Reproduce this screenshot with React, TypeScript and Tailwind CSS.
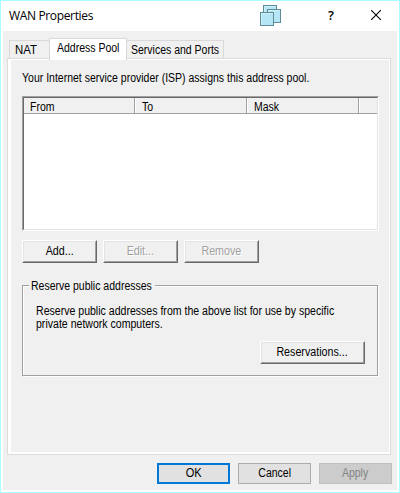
import type { ReactNode } from 'react';

function Label({ children, center = false, scale = 'scale-x-[0.875]' }: { children: ReactNode; center?: boolean; scale?: string }) {
  return <span className={`inline-block ${scale} ${center ? 'origin-center' : 'origin-left'}`}>{children}</span>;
}

function RaisedButton({ children, className = '', disabled = false }: { children: ReactNode; className?: string; disabled?: boolean }) {
  return (
    <button
      disabled={disabled}
      className={`h-[23px] border border-t-white border-l-white border-r-[#696969] border-b-[#696969] bg-[#f0f0f0] ${className}`}
    >
      <span
        className={`flex h-full items-center justify-center border border-t-[#e3e3e3] border-l-[#e3e3e3] border-r-[#a0a0a0] border-b-[#a0a0a0] pb-px ${disabled ? 'text-[#a0a0a0] [text-shadow:1px_1px_0_#fff]' : ''}`}
      >
        <Label center scale="scale-x-[0.89]">{children}</Label>
      </span>
    </button>
  );
}

function CascadeIcon() {
  const squares = [[3, 0], [7, 4], [0, 7]];
  return (
    <svg width="21" height="21" viewBox="0 0 21 21" shapeRendering="crispEdges">
      {squares.map(([x, y]) => (
        <g key={x}>
          <rect x={x + 0.5} y={y + 0.5} width="13" height="13" fill="#b5e6f5" stroke="#608c98" />
          <path d={`M${x + 1.5} ${y + 12.5}V${y + 1.5}H${x + 12.5}`} fill="none" stroke="#d0f0f9" />
        </g>
      ))}
    </svg>
  );
}

export default function App() {
  return (
    <div className="h-[493px] w-[400px] border border-[#aaffff] bg-white px-0.5 pb-0.5 font-['Liberation_Sans',Arial,sans-serif] text-[12px] leading-[13px] whitespace-nowrap text-black">
      <header className="flex h-[30px] items-start">
        <h1 className="mt-[7px] ml-[6px] w-[251px] font-['Open_Sans','Noto_Sans',sans-serif] text-[12px] leading-4 tracking-[-0.35px]">WAN Properties</h1>
        <div className="mt-1"><CascadeIcon /></div>
        <span className="mt-[6px] ml-[47px] w-[6px] font-['Open_Sans',sans-serif] text-[13px] leading-4 font-semibold">?</span>
        <svg className="mt-[9px] ml-[37px]" width="10" height="10" viewBox="0 0 10 10">
          <path d="M0 0L10 10M10 0L0 10" stroke="#000" strokeWidth="1.1" />
        </svg>
      </header>

      <main className="h-[459px] bg-[#f0f0f0] px-1 pt-[7px]">
        <nav className="relative z-10 ml-[2px] flex h-[20px] items-end">
          <div className="h-[18px] w-[40px] border border-r-0 border-b-0 border-[#d9d9d9] pt-[3px] pl-[5px]"><Label scale="scale-x-[0.95]">NAT</Label></div>
          <div className="-mb-[2px] h-[22px] w-[78px] border border-b-0 border-[#d9d9d9] bg-white pt-[3px] pl-[7px]"><Label>Address Pool</Label></div>
          <div className="h-[18px] w-[97px] border border-b-0 border-l-0 border-[#d9d9d9] pt-[3px] pl-[4px]"><Label>Services and Ports</Label></div>
        </nav>

        <section className="h-[397px] w-[384px] border border-[#dcdcdc] bg-white pt-px pr-px pb-[2px] pl-[3px]">
          <div className="h-full bg-[#f0f0f0] pt-[12px] pl-[11px]">
            <p><Label>Your Internet service provider (ISP) assigns this address pool.</Label></p>

            <div className="mt-[11px] h-[135px] w-[357px] border border-t-[#a0a0a0] border-l-[#a0a0a0] border-r-white border-b-white">
              <div className="h-full border border-t-[#696969] border-l-[#696969] border-r-[#e3e3e3] border-b-[#e3e3e3] bg-white">
                <div className="flex h-[16px] border-b border-[#a0a0a0] bg-[#f0f0f0]">
                  <div className="w-[111px] border-r border-[#a0a0a0] pt-[3px] pl-[6px]"><Label>From</Label></div>
                  <div className="w-[112px] border-r border-l border-r-[#a0a0a0] border-l-white pt-[3px] pl-[6px]"><Label>To</Label></div>
                  <div className="w-[112px] border-r border-l border-r-[#a0a0a0] border-l-white pt-[3px] pl-[6px]"><Label>Mask</Label></div>
                  <div className="flex-1 border-l border-white" />
                </div>
              </div>
            </div>

            <div className="mt-[9px] flex gap-[6px]">
              <RaisedButton className="w-[75px]">Add...</RaisedButton>
              <RaisedButton className="w-[75px]" disabled>Edit...</RaisedButton>
              <RaisedButton className="w-[75px]" disabled>Remove</RaisedButton>
            </div>

            <div className="mt-[22px] h-[91px] w-[356px] border border-[#a0a0a0] shadow-[1px_1px_0_#fff,inset_1px_1px_0_#fff]">
              <div className="-mt-[6px] ml-[6px] h-[13px] w-[126px] bg-[#f0f0f0] pl-[2px]"><Label>Reserve public addresses</Label></div>
              <p className="mt-[12px] ml-[13px]"><Label scale="scale-x-[0.88]">Reserve public addresses from the above list for use by specific<br />private network computers.</Label></p>
              <div className="mt-[10px] mr-[12px] flex justify-end">
                <RaisedButton className="w-[105px]">Reservations...</RaisedButton>
              </div>
            </div>
          </div>
        </section>

        <footer className="mt-2 mr-[1px] flex justify-end gap-2">
          <button className="h-[21px] w-[73px] border-2 border-[#0078d7] bg-[#e1e1e1]"><Label center scale="scale-x-[0.92]">OK</Label></button>
          <button className="h-[21px] w-[73px] border border-[#adadad] bg-[#e1e1e1]"><Label center>Cancel</Label></button>
          <button disabled className="h-[21px] w-[73px] border border-[#bfbfbf] bg-[#cccccc] text-[#838383]"><Label center>Apply</Label></button>
        </footer>
      </main>
    </div>
  );
}
